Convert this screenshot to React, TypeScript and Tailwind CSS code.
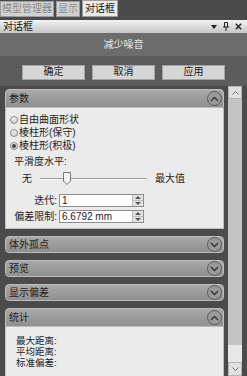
import React from 'react';

const font = { fontFamily: '"Liberation Sans", "Noto Sans CJK SC", sans-serif' };

function Chevron({ up }: { up: boolean }) {
  return (
    <div className="flex h-[15px] w-[15px] items-center justify-center rounded-full border border-[#5a5a5a] bg-[#9a9a9a]">
      <svg width="9" height="6" viewBox="0 0 9 6">
        <path
          d={up ? 'M1 5 L4.5 1.5 L8 5' : 'M1 1 L4.5 4.5 L8 1'}
          fill="none"
          stroke="#333"
          strokeWidth="1.3"
        />
      </svg>
    </div>
  );
}

function SectionHeader({ title, open }: { title: string; open: boolean }) {
  return (
    <div
      className={
        'flex h-[19px] items-center justify-between border border-[#bdbdbd] bg-gradient-to-b from-[#a9a9a9] to-[#8f8f8f] pl-[3px] pr-[1px] text-[10px] leading-[13px] text-[#1e1e1e] ' +
        (open ? 'rounded-t-[4px]' : 'rounded-[4px]')
      }
    >
      <span>{title}</span>
      <Chevron up={open} />
    </div>
  );
}

function Radio({ label, checked }: { label: string; checked?: boolean }) {
  return (
    <div className="flex h-[13px] items-center gap-[1px] text-[10px] leading-[12px] text-[#1e1e1e]">
      <div className="flex h-[8px] w-[8px] items-center justify-center rounded-full border border-[#8a8a8a] bg-gradient-to-b from-[#f4f4f4] to-[#d0d0d0]">
        {checked && <div className="h-[4px] w-[4px] rounded-full bg-[#444]" />}
      </div>
      <span>{label}</span>
    </div>
  );
}

function Field({ label, value }: { label: string; value: string }) {
  return (
    <div className="flex h-[15px] items-center text-[10px] leading-[12px] text-[#1e1e1e]">
      <span className="w-[47px] text-right">{label}</span>
      <div className="ml-[2px] flex h-[13px] w-[85px] items-center border border-[#8c8c8c] bg-white">
        <span className="flex-1 pl-[2px] leading-none">{value}</span>
        <div className="flex h-full w-[11px] flex-col border-l border-[#bbb]">
          <div className="flex flex-1 items-center justify-center border-b border-[#bbb] bg-[#e4e4e4]">
            <div className="h-0 w-0 border-x-[3px] border-b-[3px] border-x-transparent border-b-[#555]" />
          </div>
          <div className="flex flex-1 items-center justify-center bg-[#e4e4e4]">
            <div className="h-0 w-0 border-x-[3px] border-t-[3px] border-x-transparent border-t-[#555]" />
          </div>
        </div>
      </div>
    </div>
  );
}

export default function App() {
  return (
    <div className="flex h-[376px] w-[247px] flex-col overflow-hidden bg-[#4b4b4b]" style={font}>
      {/* Tabs */}
      <div className="flex h-[17px] items-end gap-[2px] text-[10px] leading-[12px]">
        <div className="flex h-[16px] w-[54px] items-center justify-center border border-[#9c9c9c] bg-[#d2d2d2] text-[#8a8a8a]">
          模型管理器
        </div>
        <div className="flex h-[16px] w-[24px] items-center justify-center border border-[#9c9c9c] bg-[#d2d2d2] text-[#8a8a8a]">
          显示
        </div>
        <div className="flex h-[17px] w-[36px] items-center justify-center border border-[#9c9c9c] bg-[#eaeaea] text-[#111]">
          对话框
        </div>
      </div>
      <div className="h-[3px]" />

      {/* Title bar */}
      <div className="flex h-[13px] items-center justify-between bg-gradient-to-b from-[#f2f2f2] to-[#c6c6c6] pl-[3px] pr-[5px] text-[10px] leading-[12px] text-[#111]">
        <span>对话框</span>
        <div className="flex items-center gap-[6px]">
          <div className="h-0 w-0 border-x-[3px] border-t-[4px] border-x-transparent border-t-[#222]" />
          <svg width="6" height="9" viewBox="0 0 6 9">
            <path d="M1.5 0.5 H4.5 V5 M1.5 0.5 V5 M0 5 H6 M3 5 V9" fill="none" stroke="#222" strokeWidth="1" />
          </svg>
          <svg width="7" height="7" viewBox="0 0 7 7">
            <path d="M0.8 0.8 L6.2 6.2 M6.2 0.8 L0.8 6.2" stroke="#222" strokeWidth="1.4" />
          </svg>
        </div>
      </div>

      {/* Dialog head */}
      <div className="flex h-[23px] items-center justify-center bg-[#6c6c6c] text-[10px] leading-[13px] text-[#e6e6e6]">
        减少噪音
      </div>
      <div className="flex h-[30px] items-center justify-center gap-[7px] bg-[#5c5c5c] pb-[2px] pt-[4px] text-[10px] text-[#1a1a1a]">
        <button className="h-[15px] w-[63px] border border-[#a4a4a4] bg-[#d6d6d6] leading-none">确定</button>
        <button className="h-[15px] w-[63px] border border-[#a4a4a4] bg-[#d6d6d6] leading-none">取消</button>
        <button className="h-[15px] w-[63px] border border-[#a4a4a4] bg-[#d6d6d6] leading-none">应用</button>
      </div>

      {/* Body */}
      <div className="flex flex-1 overflow-hidden">
        <div className="flex w-[224px] flex-col gap-[7px] pl-[5px] pt-[3px]">
          <div>
            <SectionHeader title="参数" open />
            <div className="h-[121px] border-x border-b border-[#bdbdbd] bg-[#ebebeb] pl-[4px] pt-[5px]">
              <Radio label="自由曲面形状" />
              <Radio label="棱柱形(保守)" />
              <Radio label="棱柱形(积极)" checked />
              <div className="ml-[4px] mt-[3px] h-[13px] text-[10px] leading-[13px] text-[#1e1e1e]">平滑度水平:</div>
              <div className="mt-[3px] flex h-[16px] items-center text-[10px] leading-[12px] text-[#1e1e1e]">
                <span className="ml-[12px] w-[18px]">无</span>
                <div className="relative h-[16px] w-[107px]">
                  <div className="absolute left-0 right-0 top-[7px] h-[2px] border-t border-[#9a9a9a] bg-[#fafafa]" />
                  <svg className="absolute left-[23px] top-[1px]" width="8" height="13" viewBox="0 0 8 13">
                    <path d="M0.5 0.5 H7.5 V9 L4 12.5 L0.5 9 Z" fill="#f2f2f2" stroke="#777" strokeWidth="1" />
                  </svg>
                </div>
                <span className="ml-[8px]">最大值</span>
              </div>
              <div className="mt-[6px] flex flex-col gap-[1px]">
                <Field label="迭代:" value="1" />
                <Field label="偏差限制:" value="6.6792 mm" />
              </div>
            </div>
          </div>
          <SectionHeader title="体外孤点" open={false} />
          <SectionHeader title="预览" open={false} />
          <SectionHeader title="显示偏差" open={false} />
          <div>
            <SectionHeader title="统计" open />
            <div className="h-[60px] border-x border-[#bdbdbd] bg-[#ebebeb] pl-[10px] pt-[8px] text-[9.5px] leading-[11px] text-[#1e1e1e]">
              <div className="h-[11px]">最大距离:</div>
              <div className="h-[11px]">平均距离:</div>
              <div className="h-[11px]">标准偏差:</div>
            </div>
          </div>
        </div>

        {/* Scrollbar */}
        <div className="ml-[4px] flex w-[14px] flex-col bg-[#c3c3c3]">
          <div className="flex h-[13px] items-center justify-center border border-[#b4b4b4] bg-[#e0e0e0]">
            <svg width="7" height="4" viewBox="0 0 7 4">
              <path d="M0.5 3.5 L3.5 0.5 L6.5 3.5" fill="none" stroke="#777" strokeWidth="1" />
            </svg>
          </div>
          <div className="flex-1" />
          <div className="h-[17px] bg-[#e8e8e8]" />
          <div className="flex h-[14px] items-center justify-center border border-[#b4b4b4] bg-[#e0e0e0]">
            <svg width="7" height="4" viewBox="0 0 7 4">
              <path d="M0.5 0.5 L3.5 3.5 L6.5 0.5" fill="none" stroke="#777" strokeWidth="1" />
            </svg>
          </div>
        </div>
      </div>
    </div>
  );
}
